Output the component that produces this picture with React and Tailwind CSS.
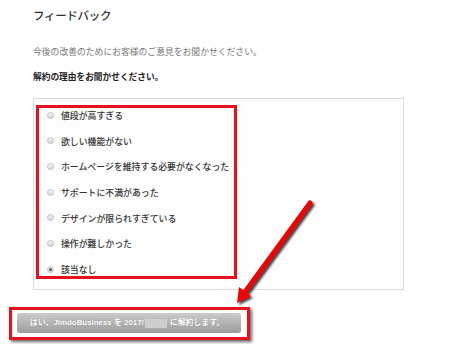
/* eslint-disable */
const reasons = [
  "値段が高すぎる",
  "欲しい機能がない",
  "ホームページを維持する必要がなくなった",
  "サポートに不満があった",
  "デザインが限られすぎている",
  "操作が難しかった",
  "該当なし",
];

function Radio({ checked }) {
  return (
    <span className="relative flex h-[7px] w-[7px] shrink-0 items-center justify-center rounded-full border border-[#bdbdbd] bg-gradient-to-b from-[#f6f6f6] to-[#d8d8d8]">
      {checked && <span className="h-[3px] w-[3px] rounded-full bg-[#555]" />}
    </span>
  );
}

export default function App() {
  return (
    <div
      className="relative h-[344px] w-[465px] overflow-hidden bg-white pl-[33px] pt-[9px] text-[#333]"
      style={{ fontFamily: '"Liberation Sans", "Noto Sans CJK JP", sans-serif' }}
    >
      <h1 className="text-[11.5px] font-medium leading-[14px] tracking-[-0.3px] text-[#333]">
        フィードバック
      </h1>
      <p className="mt-[23px] text-[8.8px] leading-[12px] text-[#777]">
        今後の改善のためにお客様のご意見をお聞かせください。
      </p>
      <p className="mt-[13px] text-[8.7px] font-bold leading-[12px] text-[#222]">
        解約の理由をお聞かせください。
      </p>

      <div className="mt-[15px] h-[192px] w-[371px] border border-[#dcdcdc] bg-[#fdfdfd] pl-[2px] pt-[6px]">
        <div className="flex h-[174px] w-[201px] flex-col gap-[13.7px] border-[3px] border-[#e8101a] pl-[8px] pt-[1px]">
          {reasons.map((r, i) => (
            <label key={r} className="flex h-[12px] items-center gap-[7px]">
              <Radio checked={i === reasons.length - 1} />
              <span className="mt-[2px] whitespace-nowrap text-[8.9px] font-medium leading-[12px] text-[#333]">
                {r}
              </span>
            </label>
          ))}
        </div>
      </div>

      <div className="-ml-[24px] mt-[17px] w-[241px] border-[3px] border-[#e8101a] pb-[4px] pl-[5px] pr-[6px] pt-[3px] shadow-[2px_2px_3px_rgba(0,0,0,0.6)]">
        <button className="flex h-[20px] w-full items-center justify-center rounded-[3px] bg-gradient-to-b from-[#cbcbcb] to-[#9c9c9c] pr-[4px] text-[7.9px] font-bold text-white [text-shadow:0_0_1px_rgba(0,0,0,0.3)]">
          はい、JimdoBusiness を 2017/
          <span className="ml-[1px] mr-[3px] inline-block h-[9px] w-[22px] bg-[#cdcdcd] blur-[0.6px]" />
          に解約します。
        </button>
      </div>

      <svg
        className="pointer-events-none absolute left-0 top-0"
        width="465"
        height="344"
        viewBox="0 0 465 344"
      >
        <defs>
          <filter id="sh" x="-20%" y="-20%" width="140%" height="140%">
            <feDropShadow dx="2" dy="2" stdDeviation="1.2" floodColor="#000" floodOpacity="0.75" />
          </filter>
        </defs>
        <g filter="url(#sh)">
          <line x1="310" y1="203" x2="245" y2="292" stroke="#f00000" strokeWidth="5" strokeLinecap="round" />
          <polygon points="237,303 239,287 251,296" fill="#f00000" />
        </g>
      </svg>
    </div>
  );
}
